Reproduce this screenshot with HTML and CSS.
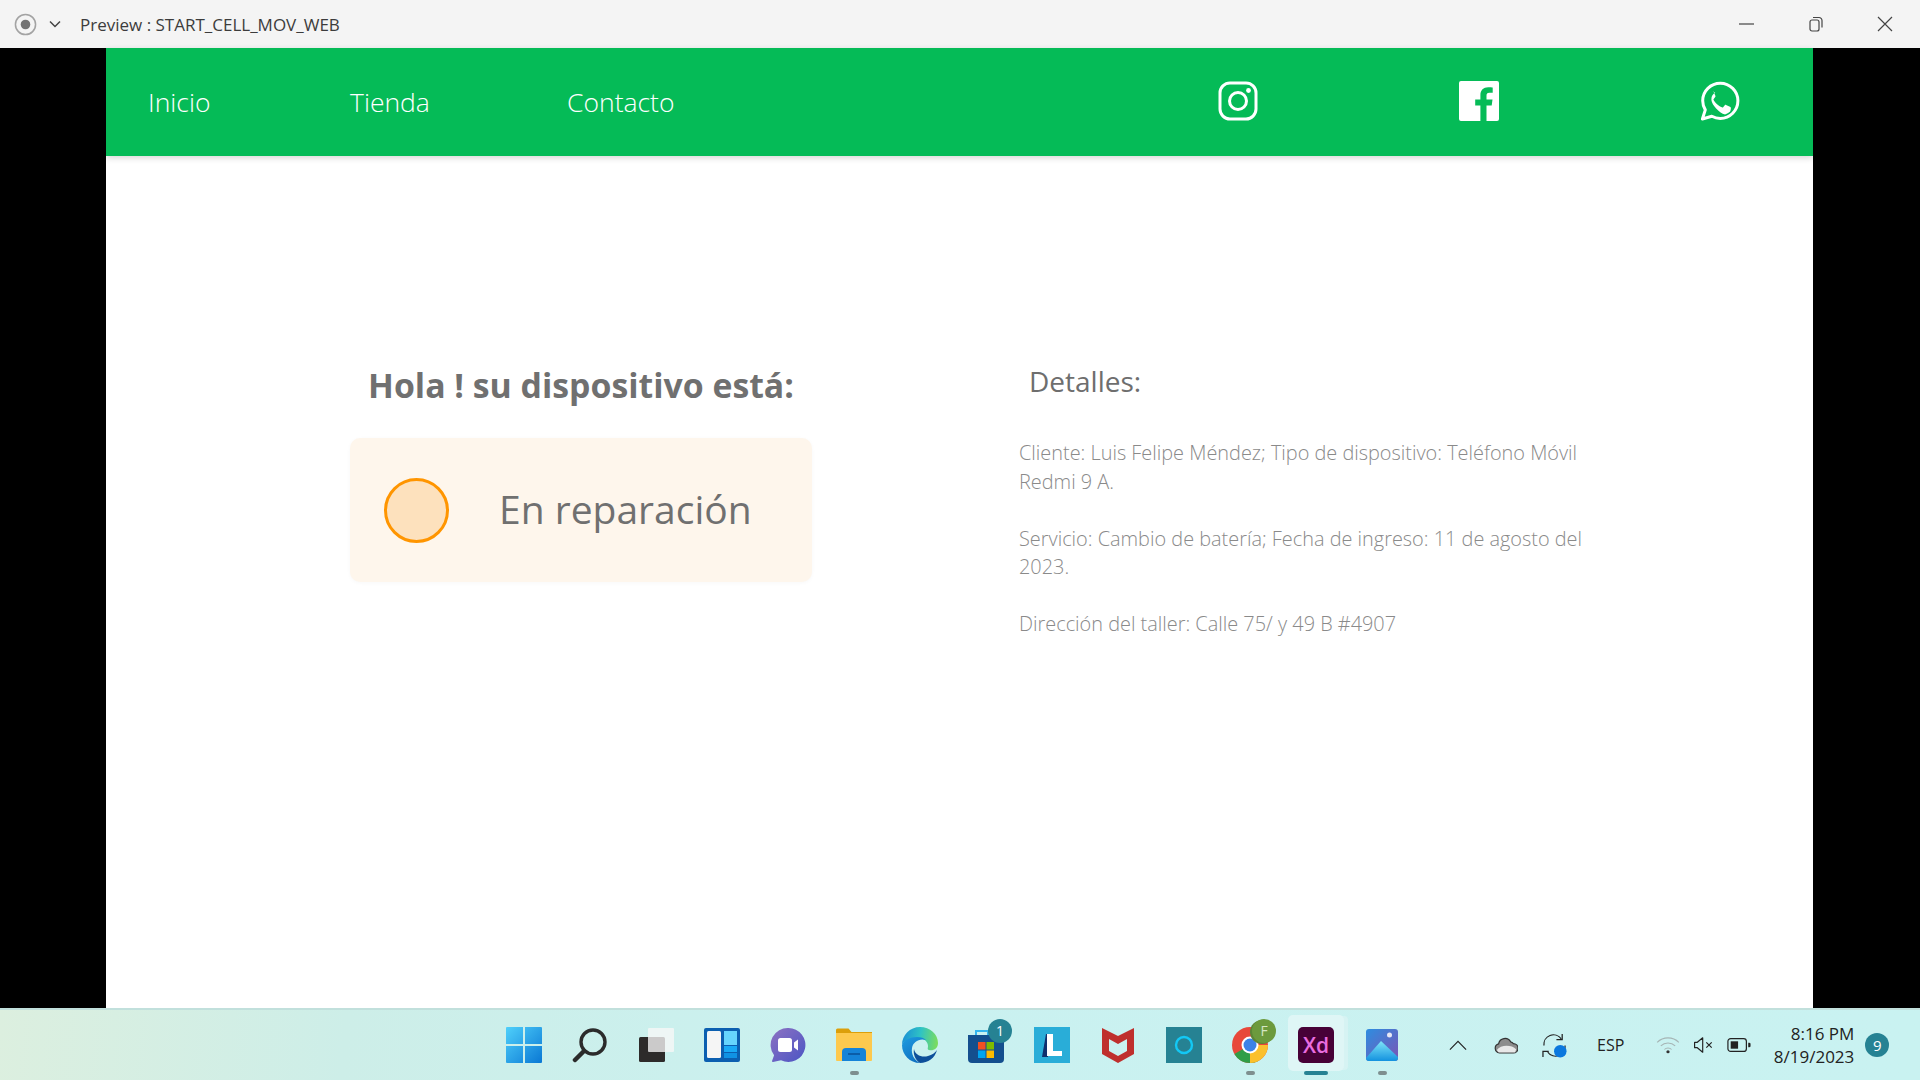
FILE: index.html
```html
<!DOCTYPE html>
<html lang="es">

<head>
  <meta charset="UTF-8" />
  <meta name="viewport" content="width=device-width, initial-scale=1.0" />
  <title>Preview : START_CELL_MOV_WEB</title>
  <link rel="stylesheet" href="styles.css">
</head>

<body>
  <!-- barra de la ventana -->
  <header class="titlebar">
    <svg class="rec-icon" viewBox="0 0 24 24"><circle cx="12" cy="12" r="10.5" fill="none" stroke="#a3a3a3" stroke-width="1.6"/><circle cx="12" cy="12" r="5" fill="#737373"/></svg>
    <svg class="chev-icon" viewBox="0 0 12 8"><path d="M1 1.5l5 5 5-5" fill="none" stroke="#444" stroke-width="1.5"/></svg>
    <span class="title-text">Preview : START_CELL_MOV_WEB</span>
    <div class="win-btns">
      <svg viewBox="0 0 16 16"><path d="M0 8h15" stroke="#444" stroke-width="1.2"/></svg>
      <svg viewBox="0 0 16 16"><rect x="2" y="4" width="9" height="11" rx="2" fill="none" stroke="#444" stroke-width="1.2"/><path d="M5 1.5h6a3 3 0 0 1 3 3v7" fill="none" stroke="#444" stroke-width="1.2"/></svg>
      <svg viewBox="0 0 16 16"><path d="M1 1l14 14M15 1L1 15" stroke="#444" stroke-width="1.2"/></svg>
    </div>
  </header>

  <div class="stage">
    <div class="page">
      <nav class="navbar">
        <div class="nav-links">
          <a href="#" class="nav-inicio">Inicio</a>
          <a href="#" class="nav-tienda">Tienda</a>
          <a href="#">Contacto</a>
        </div>
        <div class="nav-social">
          <svg viewBox="0 0 40 40"><rect x="2" y="2" width="36" height="36" rx="10" fill="none" stroke="#fff" stroke-width="3"/><circle cx="20" cy="20" r="8.5" fill="none" stroke="#fff" stroke-width="3"/><circle cx="30.5" cy="9.5" r="2.4" fill="#fff"/></svg>
          <svg viewBox="0 0 40 40"><path d="M2 0h36a2 2 0 0 1 2 2v36a2 2 0 0 1-2 2H27.500V24.500h5.200l.8-6h-6v-3.800c0-1.800.5-2.900 3-2.900h3.200V6.400c-.6-.1-2.500-.2-4.600-.2-4.600 0-7.700 2.800-7.700 7.900v4.400h-5.200v6h5.200V40H2a2 2 0 0 1-2-2V2a2 2 0 0 1 2-2z" fill="#fff"/></svg>
          <svg viewBox="0 0 40 40"><path d="M20.300 2.200C10.600 2.200 2.700 10 2.700 19.700c0 3.300.9 6.400 2.600 9.200L2.400 38l9.400-2.800c2.600 1.400 5.500 2.200 8.500 2.200 9.700 0 17.600-7.900 17.600-17.600S30 2.200 20.300 2.200z" fill="none" stroke="#fff" stroke-width="3" stroke-linejoin="round"/><path d="M14.700 10.800c-.5 0-1.300.2-2 1-.7.800-2.600 2.500-2.600 6.100s2.700 7.100 3 7.600c.4.500 5.200 8 12.800 10.100-1 0 5.200-2.100 6-4.100.7-2 .7-3.700.5-4.100-.2-.4-.8-.6-1.600-1l-3.900-1.900c-.5-.2-1-.3-1.400.3l-1.900 2.400c-.3.400-.7.500-1.400.1-.8-.4-3-1.100-5.600-3.500-2.100-1.900-3.500-4.200-3.900-4.900-.4-.7 0-1.100.3-1.500l1.700-2.200c.2-.4.100-.8 0-1.100l-1.800-4.300c-.4-1-.9-1-1.300-1z" transform="translate(2.600 2.600) scale(.87)" fill="#fff"/></svg>
        </div>
      </nav>

      <main class="content">
        <section class="status-col">
          <h1>Hola ! su dispositivo está:</h1>
          <div class="status-card">
            <span class="status-dot"></span>
            <span class="status-text">En reparación</span>
          </div>
        </section>
        <section class="details-col">
          <h2>Detalles:</h2>
          <p>Cliente: Luis Felipe Méndez; Tipo de dispositivo: Teléfono Móvil Redmi 9 A.</p>
          <p>Servicio: Cambio de batería; Fecha de ingreso: 11 de agosto del 2023.</p>
          <p>Dirección del taller: Calle 75/ y 49 B #4907</p>
        </section>
      </main>
    </div>
  </div>

  <!-- barra de tareas -->
  <footer class="taskbar">
    <div class="task-icons">
      <div class="task-item">
        <svg viewBox="0 0 36 36"><defs><linearGradient id="win" x1="0" y1="0" x2="1" y2="1"><stop offset="0" stop-color="#4fd0fb"/><stop offset="1" stop-color="#0a78d4"/></linearGradient></defs><path d="M1 0h16v17H0V1a1 1 0 0 1 1-1zM19 0h16a1 1 0 0 1 1 1v16H19zM0 19h17v17H1a1 1 0 0 1-1-1zM19 19h17v16a1 1 0 0 1-1 1H19z" fill="url(#win)"/></svg>
      </div>
      <div class="task-item">
        <svg viewBox="0 0 36 36"><circle cx="21" cy="15" r="12" fill="none" stroke="#2b2b2b" stroke-width="3.400"/><path d="M12 24L3 33" stroke="#2b2b2b" stroke-width="4.500" stroke-linecap="round"/></svg>
      </div>
      <div class="task-item">
        <svg viewBox="0 0 36 36"><rect x="1" y="10" width="26" height="25" rx="1.500" fill="#2d2b2a"/><rect x="10" y="1" width="26" height="24" rx="1" fill="#f7f7f7" fill-opacity=".78"/></svg>
      </div>
      <div class="task-item">
        <svg viewBox="0 0 36 36"><rect x="0" y="1" width="36" height="34" rx="2" fill="#0c5fb0"/><rect x="3" y="4" width="14" height="27" rx="1.500" fill="#f5f5f5"/><rect x="20" y="4" width="13" height="14" fill="#66d5fd"/><rect x="20" y="19" width="13" height="6" fill="#19a9f5"/><rect x="20" y="26" width="13" height="5" fill="#1092e4"/></svg>
      </div>
      <div class="task-item">
        <svg viewBox="0 0 36 36"><defs><linearGradient id="chat" x1="0" y1="0" x2="1" y2="1"><stop offset="0" stop-color="#8d72c2"/><stop offset="1" stop-color="#4b55c4"/></linearGradient></defs><path d="M18.500 1a17 17 0 1 1-7.500 32.300L3 35c-.8.100-1.200-.5-.9-1.200l2-5.500A17 17 0 0 1 18.500 1z" fill="url(#chat)"/><rect x="8" y="11" width="14" height="14" rx="2.500" fill="#fff"/><path d="M24 15.500l4-3v11l-4-3z" fill="#fff"/></svg>
      </div>
      <div class="task-item has-dot">
        <svg viewBox="0 0 36 36"><path d="M0 3a1.500 1.500 0 0 1 1.500-1.500h11l3 3.500H36v3H0z" fill="#dc9f0a"/><path d="M0 6h36v27a1 1 0 0 1-1 1H1a1 1 0 0 1-1-1z" fill="#fdc94e"/><path d="M6 34v-9a4 4 0 0 1 4-4h16a4 4 0 0 1 4 4v9z" fill="#1583d8"/><path d="M12 27h12" stroke="#0b5da8" stroke-width="2"/></svg>
      </div>
      <div class="task-item">
        <svg viewBox="0 0 36 36"><defs><linearGradient id="edge" x1="0" y1=".4" x2="1" y2=".5"><stop offset="0" stop-color="#1a8fd6"/><stop offset=".5" stop-color="#2fc3c4"/><stop offset="1" stop-color="#7cdc5e"/></linearGradient><linearGradient id="edge2" x1="0" y1="0" x2=".6" y2="1"><stop offset="0" stop-color="#1d9be0"/><stop offset="1" stop-color="#0f6fc0"/></linearGradient></defs><path d="M0 18C0 8 8 0 18 0c10 0 18 7 18 16 0 6-5 8-9 7-2-.5-1-2-1-4 0-4-4-8-9-8C8 11 2 14 0 18z" fill="url(#edge)"/><path d="M0 18c2-5 8-8 15-8 4 0 7 1 9 3-7-2-13 2-14 8-1 6 2 12 8 15C8 36 0 28 0 18z" fill="url(#edge2)"/><path d="M12 22c1 6 8 9 14 7 4-1 7-3 9-6-2 8-9 13-17 13-5-3-7-9-6-14z" fill="#0d4f9a"/></svg>
      </div>
      <div class="task-item">
        <svg viewBox="0 0 36 36"><path d="M8 8V4h12v4" fill="none" stroke="#35b5ee" stroke-width="2"/><path d="M0 8h36v24a4 4 0 0 1-4 4H4a4 4 0 0 1-4-4z" fill="#144f8e"/><rect x="10" y="15" width="7.500" height="7.500" fill="#f25022"/><rect x="18.500" y="15" width="7.500" height="7.500" fill="#7fba00"/><rect x="10" y="23.500" width="7.500" height="7.500" fill="#00a4ef"/><rect x="18.500" y="23.500" width="7.500" height="7.500" fill="#ffb900"/></svg>
        <span class="task-badge">1</span>
      </div>
      <div class="task-item">
        <svg viewBox="0 0 36 36"><rect width="36" height="36" fill="#29add8"/><path d="M13 7h-1L8 30h6z" fill="#0f2f6e"/><path d="M13 7h6v17h9v5H13z" fill="#fff"/></svg>
      </div>
      <div class="task-item">
        <svg viewBox="0 0 36 36"><path d="M2 1l16 8 16-8v26l-16 9-16-9zM9 12v12l9 5 9-5V12l-9 5z" fill="#bf2f2d" fill-rule="evenodd"/></svg>
      </div>
      <div class="task-item">
        <svg viewBox="0 0 36 36"><rect width="36" height="36" fill="#268293"/><circle cx="18" cy="18" r="8" fill="none" stroke="#13c8f5" stroke-width="2.400"/></svg>
      </div>
      <div class="task-item has-dot">
        <svg viewBox="0 0 36 36"><circle cx="18" cy="18" r="18" fill="#e8483a"/><path d="M18 18L2.400 27a18 18 0 0 0 15.600 9c3 0 6-.8 8-2z" fill="#2f9e47"/><path d="M18 18h18a18 18 0 0 1-18 18z" fill="#fbc02d"/><circle cx="18" cy="18" r="8.500" fill="#fff"/><circle cx="18" cy="18" r="6.500" fill="#3b82e8"/></svg>
        <span class="task-badge badge-green">F</span>
      </div>
      <div class="task-item active">
        <div class="xd-icon">Xd</div>
      </div>
      <div class="task-item has-dot">
        <svg viewBox="0 0 36 36"><defs><linearGradient id="pho" x1="0" y1="0" x2="1" y2="1"><stop offset="0" stop-color="#2d8de0"/><stop offset="1" stop-color="#7b55b5"/></linearGradient><linearGradient id="mnt" x1="0" y1="0" x2="0" y2="1"><stop offset="0" stop-color="#7fe4f8"/><stop offset="1" stop-color="#1392df"/></linearGradient></defs><rect width="32" height="32" x="2" y="2" rx="3" fill="url(#pho)"/><circle cx="25.500" cy="8" r="2.500" fill="#e8e8f5"/><path d="M2 31l15-17 17 16v1a3 3 0 0 1-3 3H5a3 3 0 0 1-3-3z" fill="url(#mnt)"/></svg>
      </div>
    </div>

    <div class="tray">
      <svg class="tray-chevron" viewBox="0 0 20 12"><path d="M1 10.500l9-9 9 9" fill="none" stroke="#222" stroke-width="1.300"/></svg>
      <svg class="tray-cloud" viewBox="0 0 26 18"><path d="M6 17a5 5 0 0 1-1-9.800A7 7 0 0 1 18 5a5 5 0 0 1 3 2 4.800 4.800 0 0 1 0 10z" fill="#8c8c8c" stroke="#333" stroke-width="1.300"/><path d="M3 14c4-6 16-6 21-1l-1 3.500H5z" fill="#e8e8e8"/></svg>
      <div class="tray-sync">
        <svg viewBox="0 0 26 26"><path d="M2 13A10 10 0 0 1 20 6M24 13A10 10 0 0 1 6 20" fill="none" stroke="#222" stroke-width="1.300"/><path d="M21 1v6h-6M1 25v-6h6" fill="none" stroke="#222" stroke-width="1.300"/><circle cx="19" cy="19" r="6.500" fill="#0b78de"/></svg>
      </div>
      <span class="tray-lang">ESP</span>
      <svg class="tray-wifi" viewBox="0 0 26 20"><path d="M1 7a17 17 0 0 1 24 0M5 11a11.500 11.500 0 0 1 16 0M9 15a5.500 5.500 0 0 1 8 0" fill="none" stroke="#a6b5b5" stroke-width="1.200"/><circle cx="13" cy="17.500" r="1.800" fill="#333"/></svg>
      <svg class="tray-mute" viewBox="0 0 24 20"><path d="M1 7h3l6-5v16l-6-5H1z" fill="none" stroke="#222" stroke-width="1.300" stroke-linejoin="round"/><path d="M14 7l6 6M20 7l-6 6" stroke="#222" stroke-width="1.300"/></svg>
      <svg class="tray-batt" viewBox="0 0 26 16"><rect x="1" y="1" width="20" height="14" rx="3" fill="none" stroke="#222" stroke-width="1.300"/><rect x="4" y="4" width="8" height="8" fill="#222"/><path d="M23 5.500h1a1.500 1.500 0 0 1 1.500 1.500v2a1.500 1.500 0 0 1-1.500 1.500h-1z" fill="#222"/></svg>
      <div class="tray-clock">
        <span>8:16 PM</span>
        <span>8/19/2023</span>
      </div>
      <span class="tray-badge">9</span>
    </div>
  </footer>
</body>

</html>
```

FILE: styles.css
```css
* {
  box-sizing: border-box;
}

html,
body {
  margin: 0;
  padding: 0;
  height: 100%;
}

body {
  display: flex;
  flex-direction: column;
  height: 1080px;
  overflow: hidden;
  font-family: "Open Sans", "Noto Sans", sans-serif;
  background-color: #000;
}

/* ventana */
.titlebar {
  height: 48px;
  flex: none;
  display: flex;
  align-items: center;
  padding-left: 14px;
  background-color: #f4f4f4;
  color: #3c3c3c;
  font-size: 17px;
}

.rec-icon {
  width: 23px;
  height: 23px;
  margin-right: 12px;
}

.chev-icon {
  width: 12px;
  height: 8px;
  margin-right: 19px;
}

.win-btns {
  margin-left: auto;
  display: flex;
  gap: 53px;
  padding-right: 27px;
}

.win-btns svg {
  width: 16px;
  height: 16px;
}

.stage {
  flex: 1;
  display: flex;
  min-height: 0;
  padding-left: 106px;
}

.page {
  width: 1707px;
  background-color: #fff;
}

/* nav verde */
.navbar {
  height: 108px;
  display: flex;
  align-items: center;
  padding-left: 42px;
  background-color: #05bb57;
  box-shadow: 0 2px 6px rgba(0, 0, 0, 0.16);
  color: #fff;
}

.nav-links {
  display: flex;
  font-size: 26.5px;
  font-weight: 300;
}

.nav-links a {
  color: #fff;
  text-decoration: none;
}

.nav-inicio {
  width: 202px;
}

.nav-tienda {
  width: 217px;
}

.nav-social {
  margin-left: auto;
  display: flex;
  gap: 201px;
  padding-right: 73px;
}

.nav-social svg {
  width: 40px;
  height: 40px;
  display: block;
  margin-bottom: 2px;
}

/* contenido */
.content {
  display: flex;
  padding: 205px 0 0 244px;
  color: #707070;
}

.status-col {
  width: 462px;
  flex: none;
}

.status-col h1 {
  margin: 0 0 29px;
  font-size: 33.8px;
  line-height: 48px;
  font-weight: 700;
  text-align: center;
  white-space: nowrap;
}

.status-card {
  height: 144px;
  display: flex;
  align-items: center;
  padding-left: 34px;
  background-color: #fef6ec;
  border-radius: 10px;
  box-shadow: 0 1px 4px rgba(0, 0, 0, 0.03);
}

.status-dot {
  width: 65px;
  height: 65px;
  border: 3px solid #ff9500;
  border-radius: 50%;
  background-color: #fde1bd;
  margin-right: 50px;
}

.status-text {
  margin-top: -4px;
  font-size: 39px;
  font-weight: 400;
}

.details-col {
  width: 570px;
  margin-left: 207px;
}

.details-col h2 {
  margin: 0 0 38px 10px;
  font-size: 28px;
  line-height: 40px;
  font-weight: 400;
  color: #6e6e6e;
}

.details-col p {
  margin: 0 0 28.500px;
  font-size: 19.9px;
  line-height: 28.5px;
  font-weight: 300;
  color: #8a8a8a;
}

/* barra de tareas */
.taskbar {
  position: relative;
  height: 72px;
  flex: none;
  display: flex;
  align-items: center;
  padding-left: 491px;
  border-top: 2px solid #c1e0dc;
  background: linear-gradient(95deg, #dcefdf 0%, #cdeee8 18%, #caf1f0 45%, #c9f2f1 100%);
}

.task-icons {
  display: flex;
}

.task-item {
  position: relative;
  width: 66px;
  height: 60px;
  display: flex;
  align-items: center;
  justify-content: center;
}

.task-item svg {
  width: 36px;
  height: 36px;
}

.has-dot::after {
  content: "";
  position: absolute;
  left: 29px;
  bottom: 0;
  width: 9px;
  height: 4px;
  border-radius: 2px;
  background-color: #7e8f8f;
}

.task-badge {
  position: absolute;
  top: 4px;
  left: 35px;
  width: 24px;
  height: 24px;
  border-radius: 50%;
  background-color: #268293;
  color: #fff;
  font-size: 14px;
  line-height: 24px;
  text-align: center;
}

.badge-green {
  background-color: #6c9a3d;
  color: #d6e6c4;
  box-shadow: -2px 1px 0 #5c8537;
}

.active::before {
  content: "";
  position: absolute;
  top: 0;
  left: 5px;
  width: 56px;
  height: 56px;
  border-radius: 5px;
  background-color: #dff6f6;
  box-shadow: 5px 0 0 -1px #d6f3f3;
}

.active::after {
  content: "";
  position: absolute;
  left: 21px;
  bottom: 0;
  width: 24px;
  height: 4px;
  border-radius: 2px;
  background-color: #268293;
}

.xd-icon {
  position: relative;
  width: 36px;
  height: 36px;
  border-radius: 5px;
  background-color: #470137;
  color: #ea6de0;
  font-size: 21px;
  font-weight: 600;
  line-height: 36px;
  text-align: center;
}

.tray {
  position: absolute;
  top: 0;
  right: 0;
  bottom: 0;
  left: 1440px;
  display: flex;
  align-items: center;
  color: #222;
}

.tray-chevron {
  width: 18px;
  height: 11px;
  margin-left: 9px;
}

.tray-cloud {
  width: 24px;
  height: 17px;
  margin-left: 27px;
}

.tray-sync {
  width: 25px;
  height: 25px;
  margin-left: 24px;
}

.tray-sync svg {
  display: block;
}

.tray-lang {
  font-size: 16px;
  margin-left: 30px;
}

.tray-wifi {
  width: 24px;
  height: 18px;
  margin-left: 32px;
}

.tray-mute {
  width: 23px;
  height: 18px;
  margin-left: 13px;
}

.tray-batt {
  width: 24px;
  height: 16px;
  margin-left: 11px;
}

.tray-clock {
  width: 95px;
  margin-left: 8px;
  display: flex;
  flex-direction: column;
  align-items: flex-end;
  font-size: 17px;
  line-height: 23px;
}

.tray-badge {
  width: 24px;
  height: 24px;
  margin-left: 11px;
  border-radius: 50%;
  background-color: #268293;
  color: #fff;
  font-size: 15px;
  line-height: 24px;
  text-align: center;
}
```
